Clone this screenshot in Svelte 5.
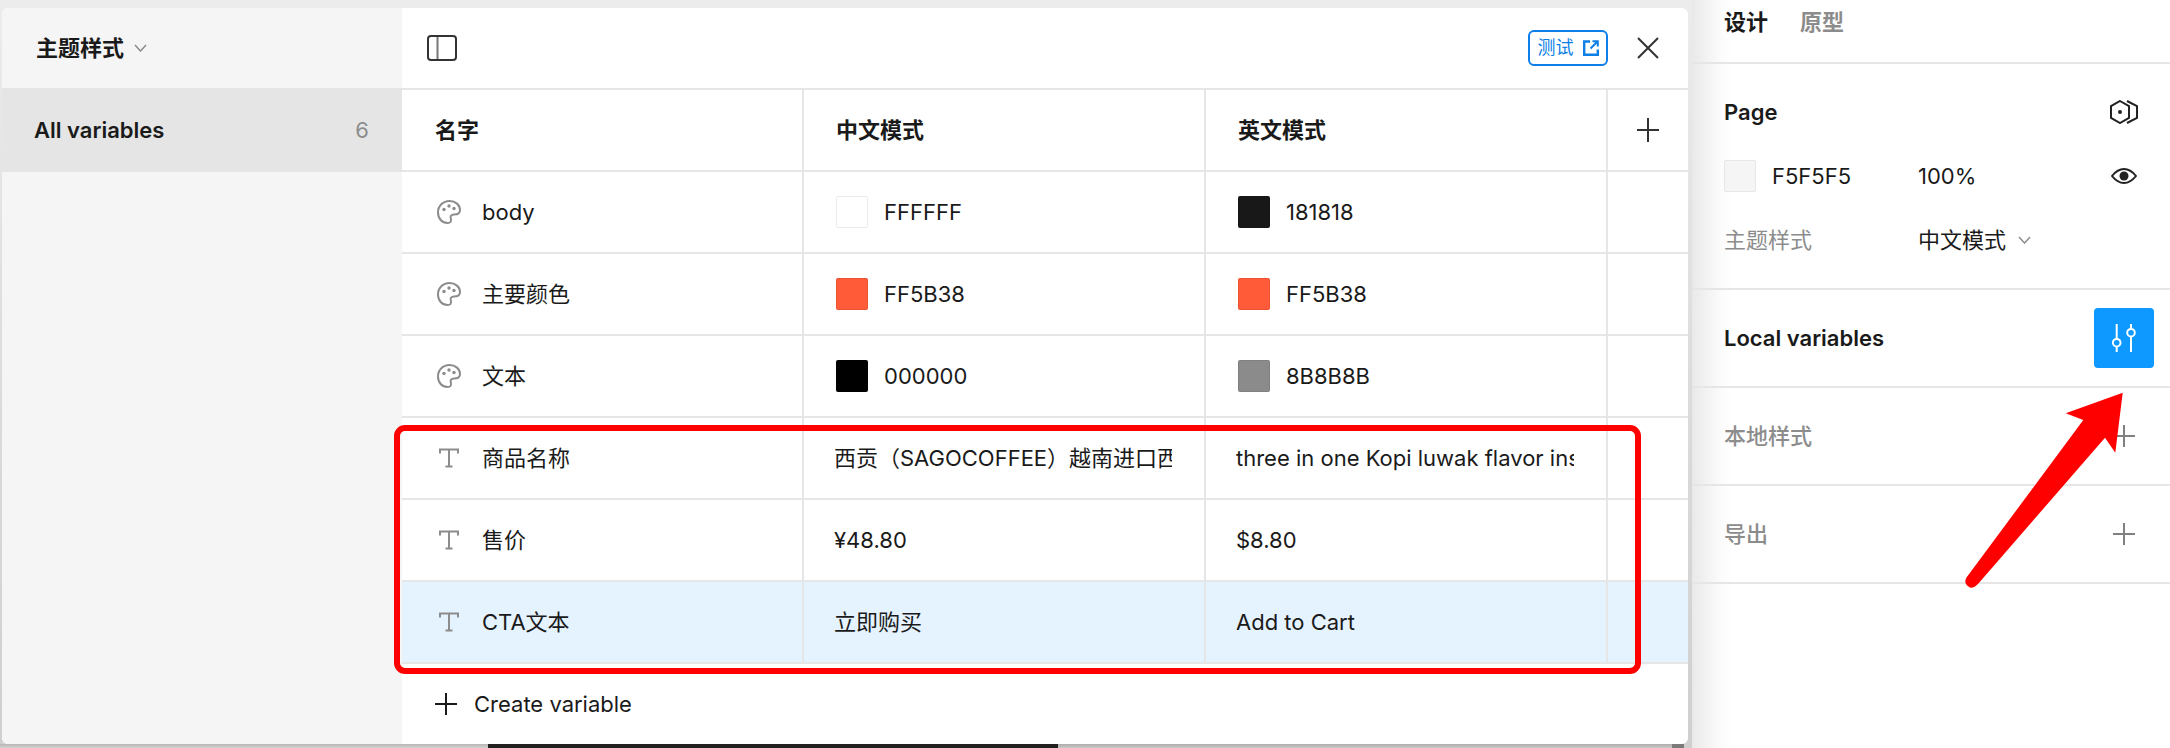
<script>
    const colors = [
        { name: "body", a: "FFFFFF", b: "181818" },
        { name: "主要颜色", a: "FF5B38", b: "FF5B38" },
        { name: "文本", a: "000000", b: "8B8B8B" }
    ];

    const texts = [
        { name: "商品名称", a: "西贡（SAGOCOFFEE）越南进口西贡咖啡三合一猫屎咖啡", b: "three in one Kopi luwak flavor instant coffee" },
        { name: "售价", a: "¥48.80", b: "$8.80" },
        { name: "CTA文本", a: "立即购买", b: "Add to Cart", active: true }
    ];
</script>

<div class="page">
    <div class="left">
        <div class="modal">
            <aside class="sidebar">
                <div class="side-head">
                    <span class="bold">主题样式</span>
                    <svg class="chev" width="13" height="8" viewBox="0 0 13 8"><path d="M1 1l5.500 6L12 1" /></svg>
                </div>
                <div class="side-item">
                    <span class="semi">All variables</span>
                    <span class="count">6</span>
                </div>
            </aside>

            <div class="main">
                <div class="top">
                    <svg width="30" height="26" viewBox="0 0 30 26" fill="none">
                        <rect x="1" y="1" width="28" height="24" rx="3" stroke="#333" stroke-width="2" />
                        <path d="M10.500 2v22" stroke="#777" stroke-width="2" />
                    </svg>
                    <div class="top-right">
                        <div class="test-btn">
                            <span>测试</span>
                            <svg width="16" height="16" viewBox="0 0 16 16" fill="none" stroke="#0d7fe6" stroke-width="2.400">
                                <path d="M7 1.500H1.200v13.300h13.600V9.500" />
                                <path d="M7.500 8.500L14.500 1.500M9.500 1.200h5.300v5.300" stroke-width="2" />
                            </svg>
                        </div>
                        <svg width="22" height="22" viewBox="0 0 22 22" stroke="#333" stroke-width="2"><path d="M1 1l20 20M21 1L1 21" /></svg>
                    </div>
                </div>

                <div class="row">
                    <div class="cell head">名字</div>
                    <div class="cell head val">中文模式</div>
                    <div class="cell head val">英文模式</div>
                    <div class="cell end">
                        <svg width="22" height="24" viewBox="0 0 22 24" stroke="#333" stroke-width="2"><path d="M0 12h22M11 0v24" /></svg>
                    </div>
                </div>

                {#each colors as c}
                    <div class="row">
                        <div class="cell name">
                            <svg class="ico" width="24" height="24" viewBox="0 0 24 24" fill="none">
                                <path d="M12.500 1C6 1 1 6 1 12.500 1 18.500 5 23 10.500 23c3.200 0 4.200-2 3.300-4.500-.8-2.300.5-4 3.200-4 3.800 0 6-1.500 6-4.500C23 5 18.500 1 12.500 1z" stroke="#8c8c8c" stroke-width="2" />
                                <circle cx="7" cy="9.500" r="1.700" fill="#8c8c8c" />
                                <circle cx="12" cy="6" r="1.700" fill="#8c8c8c" />
                                <circle cx="17" cy="8.500" r="1.700" fill="#8c8c8c" />
                            </svg>
                            <span>{c.name}</span>
                        </div>
                        <div class="cell val">
                            <span class="swatch" style:background={"#" + c.a}></span>
                            <span>{c.a}</span>
                        </div>
                        <div class="cell val">
                            <span class="swatch" style:background={"#" + c.b}></span>
                            <span>{c.b}</span>
                        </div>
                        <div class="cell end"></div>
                    </div>
                {/each}

                {#each texts as t}
                    <div class="row" class:active={t.active}>
                        <div class="cell name">
                            <svg class="ico" width="24" height="20" viewBox="0 0 24 20" fill="none" stroke="#8c8c8c" stroke-width="2">
                                <path d="M3 5.500V1.500h18v4M12 1.500V18.500M8.500 18.500h7" />
                            </svg>
                            <span>{t.name}</span>
                        </div>
                        <div class="cell val"><span class="clip">{t.a}</span></div>
                        <div class="cell val"><span class="clip">{t.b}</span></div>
                        <div class="cell end"></div>
                    </div>
                {/each}

                <div class="create">
                    <svg width="22" height="22" viewBox="0 0 22 22" stroke="#1a1a1a" stroke-width="2"><path d="M0 11h22M11 0v22" /></svg>
                    <span>Create variable</span>
                </div>
            </div>
        </div>
        <div class="strip">
            <div class="strip-a"></div>
            <div class="strip-b"></div>
            <div class="strip-c"></div>
            <div class="strip-d"></div>
        </div>
    </div>

    <section class="panel">
        <div class="tabs">
            <span class="bold">设计</span>
            <span class="tab-off">原型</span>
        </div>

        <div class="page-sec">
            <div class="line">
                <span class="semi">Page</span>
                <svg class="right-ico" width="28" height="24" viewBox="0 0 28 24" fill="none" stroke="#222" stroke-width="2">
                    <path d="M10 1l9 5.200v11.600L10 23l-9-5.200V6.200z" />
                    <path d="M17 1l10 5.200v11.600L17 23" />
                    <circle cx="10" cy="12" r="2" fill="#222" stroke="none" />
                </svg>
            </div>
            <div class="line cols">
                <div class="col-a">
                    <span class="swatch page-swatch"></span>
                    <span>F5F5F5</span>
                </div>
                <span class="col-b">100%</span>
                <svg class="right-ico eye" width="26" height="16" viewBox="0 0 26 16" fill="none">
                    <path d="M1 8c4-5 8-7 12-7s8 2 12 7c-4 5-8 7-12 7S5 13 1 8z" stroke="#222" stroke-width="2" />
                    <circle cx="13" cy="8" r="4.500" fill="#222" />
                </svg>
            </div>
            <div class="line cols">
                <div class="col-a grey">主题样式</div>
                <div class="col-b mode">
                    <span>中文模式</span>
                    <svg class="chev" width="13" height="8" viewBox="0 0 13 8"><path d="M1 1l5.500 6L12 1" /></svg>
                </div>
            </div>
        </div>

        <div class="sec sec-vars">
            <span class="semi">Local variables</span>
            <div class="var-btn">
                <svg width="40" height="40" viewBox="0 0 40 40" fill="none" stroke="#fff" stroke-width="2">
                    <path d="M12.700 6v28M27 6v28" />
                    <circle cx="12.700" cy="24.700" r="3.800" fill="#0d99ff" />
                    <circle cx="27" cy="14.700" r="3.800" fill="#0d99ff" />
                </svg>
            </div>
        </div>

        <div class="sec">
            <span class="grey medium">本地样式</span>
            <svg class="right-ico plus" width="22" height="22" viewBox="0 0 22 22" stroke="#808080" stroke-width="2"><path d="M0 11h22M11 0v22" /></svg>
        </div>

        <div class="sec">
            <span class="grey medium">导出</span>
            <svg class="right-ico plus" width="22" height="22" viewBox="0 0 22 22" stroke="#808080" stroke-width="2"><path d="M0 11h22M11 0v22" /></svg>
        </div>
    </section>

    <!-- annotations drawn on top of the screenshot -->
    <div class="red-box"></div>
    <svg class="arrow" width="2170" height="748" viewBox="0 0 2170 748">
        <path d="M2122.700 392.700L2065.700 413.300L2083.300 420L1966.500 577.500Q1963 584 1970 587.500Q1974 588.500 1978 584L2105 437.700L2115.300 452.700Z" fill="#ff0000" />
    </svg>
</div>

<style>
    :global(body) {
        margin: 0;
        background: #fff;
    }

    .page {
        position: relative;
        display: flex;
        width: 2170px;
        height: 748px;
        overflow: hidden;
        font-family: "Inter", "Noto Sans CJK SC", sans-serif;
        font-size: 22px;
        line-height: 28px;
        color: #1a1a1a;
    }

    .left {
        width: 1692px;
        flex: none;
        display: flex;
        flex-direction: column;
        padding-top: 8px;
        box-sizing: border-box;
        background: linear-gradient(#ececec, #dcdcdc 50%, #cfcfcf);
    }

    .modal {
        display: flex;
        height: 736px;
        width: 1686px;
        margin-left: 2px;
        border-radius: 6px;
        overflow: hidden;
        background: #fff;
    }

    .strip {
        display: flex;
        height: 4px;
    }

    .strip-a {
        width: 488px;
        background: linear-gradient(#b5b5b5, #d2d2d2);
    }

    .strip-b {
        width: 570px;
        background: #222;
    }

    .strip-c {
        width: 614px;
        background: linear-gradient(#aeaeae, #c8c8c8);
    }

    .strip-d {
        width: 12px;
        background: #7a7a7a;
    }

    .sidebar {
        width: 400px;
        flex: none;
        background: #f5f5f5;
    }

    .side-head {
        display: flex;
        align-items: center;
        gap: 10px;
        height: 80px;
        padding-left: 34px;
    }

    .side-item {
        display: flex;
        align-items: center;
        justify-content: space-between;
        height: 84px;
        padding: 0 33px 0 32px;
        background: #e5e5e5;
    }

    .count {
        color: #8c8c8c;
    }

    .bold {
        font-weight: 700;
    }

    .semi {
        font-weight: 600;
    }

    .medium {
        font-weight: 500;
    }

    .chev {
        fill: none;
        stroke: #8c8c8c;
        stroke-width: 1.5;
    }

    .main {
        flex: 1;
        min-width: 0;
    }

    .top {
        display: flex;
        align-items: center;
        justify-content: space-between;
        height: 80px;
        padding: 0 29px 0 25px;
        border-bottom: 2px solid #e6e6e6;
    }

    .top-right {
        display: flex;
        align-items: center;
        gap: 29px;
    }

    .test-btn {
        display: flex;
        align-items: center;
        justify-content: center;
        gap: 9px;
        width: 80px;
        height: 36px;
        box-sizing: border-box;
        border: 2px solid #0d7fe6;
        border-radius: 6px;
        font-size: 18px;
        color: #0d7fe6;
    }

    .row {
        display: grid;
        grid-template-columns: 402px 402px 402px 1fr;
        height: 82px;
        box-sizing: border-box;
        border-bottom: 2px solid #e6e6e6;
    }

    .row.active {
        background: #e5f3fe;
    }

    .cell {
        display: flex;
        align-items: center;
        min-width: 0;
        box-sizing: border-box;
        border-right: 2px solid #e6e6e6;
    }

    .cell.end {
        justify-content: center;
        border-right: none;
    }

    .head {
        padding-left: 33px;
        font-weight: 600;
    }

    .name {
        padding-left: 35px;
        gap: 21px;
    }

    .ico {
        flex: none;
    }

    .val {
        padding: 0 32px;
        gap: 16px;
    }

    .swatch {
        width: 32px;
        height: 32px;
        flex: none;
        box-sizing: border-box;
        border-radius: 2px;
        border: 1px solid rgba(0, 0, 0, 0.08);
    }

    .clip {
        overflow: hidden;
        white-space: nowrap;
        margin-left: -2px;
    }

    .create {
        display: flex;
        align-items: center;
        gap: 17px;
        height: 80px;
        padding-left: 33px;
    }

    .panel {
        flex: 1;
        background: linear-gradient(to right, #e9e9e9, #fbfbfb 28px, #fff 40px);
    }

    .tabs {
        display: flex;
        align-items: center;
        gap: 32px;
        height: 62px;
        padding: 0 32px 18px;
        box-sizing: border-box;
        border-bottom: 2px solid #e6e6e6;
        height: 64px;
    }

    .tab-off {
        font-weight: 600;
        color: #8c8c8c;
    }

    .page-sec {
        padding: 16px 32px;
        border-bottom: 2px solid #e6e6e6;
    }

    .line {
        display: flex;
        align-items: center;
        justify-content: space-between;
        height: 64px;
    }

    .cols {
        display: grid;
        grid-template-columns: 194px 1fr auto;
    }

    .col-a {
        display: flex;
        align-items: center;
        gap: 16px;
    }

    .col-b {
        display: flex;
        align-items: center;
    }

    .mode {
        gap: 12px;
    }

    .grey {
        color: #8c8c8c;
    }

    .page-swatch {
        background: #f5f5f5;
        border: 1px solid #e6e6e6;
    }

    .eye {
        margin-right: 1px;
    }

    .sec {
        display: flex;
        align-items: center;
        justify-content: space-between;
        height: 96px;
        padding: 0 35px 0 32px;
        border-bottom: 2px solid #e6e6e6;
    }

    .sec-vars {
        padding-right: 16px;
    }

    .var-btn {
        display: flex;
        align-items: center;
        justify-content: center;
        width: 60px;
        height: 60px;
        border-radius: 4px;
        background: #0d99ff;
    }

    .red-box {
        position: absolute;
        left: 394px;
        top: 425px;
        width: 1247px;
        height: 249px;
        box-sizing: border-box;
        border: 6px solid #ff0000;
        border-radius: 11px;
    }

    .arrow {
        position: absolute;
        left: 0;
        top: 0;
    }
</style>
